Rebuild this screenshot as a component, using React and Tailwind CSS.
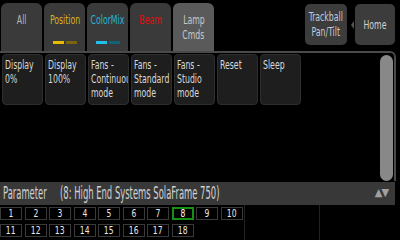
import React from "react";

const font = { fontFamily: '"DejaVu Sans Condensed", "Liberation Sans", sans-serif' };

const tabs = [
  { label: "All", color: "text-[#b8b8b8]" },
  { label: "Position", color: "text-[#d6b21c]", bars: ["bg-[#e6bb00]", "bg-[#7a6410]"] },
  { label: "ColorMix", color: "text-[#27b4d8]", bars: ["bg-[#1fc0ea]", "bg-[#0f6478]"] },
  { label: "Beam", color: "text-[#e01010]" },
];

// lines as they wrap on the console buttons
const actions = [
  ["Display", "0%"],
  ["Display", "100%"],
  ["Fans -", "Continuous", "mode"],
  ["Fans -", "Standard", "mode"],
  ["Fans -", "Studio", "mode"],
  ["Reset"],
  ["Sleep"],
];

const row1 = [1, 2, 3, 4, 5, 6, 7, 8, 9, 10];
const row2 = [11, 12, 13, 14, 15, 16, 17, 18];

const NumBox = ({ n }) => (
  <div
    className={
      n === 8
        ? "w-[22px] h-[13px] border-2 border-[#149014] bg-black flex items-center justify-center text-[10px] leading-none text-white"
        : "w-[22px] h-[13px] border border-[#3a3a3a] bg-black flex items-center justify-center text-[10px] leading-none text-[#e8e8e8]"
    }
  >
    <span className="inline-block scale-x-[0.85]">{n}</span>
  </div>
);

export default function App() {
  return (
    <div className="w-[400px] h-[240px] bg-black overflow-hidden flex flex-col" style={font}>
      {/* top tab row */}
      <div className="h-[51px] flex items-start shrink-0">
        <div className="flex gap-[2px] ml-[1px] mt-[3px]">
          {tabs.map((t) => (
            <div
              key={t.label}
              className="w-[41px] h-[48px] rounded-t-[6px] bg-[#3a3a3a] flex flex-col items-center pt-[10px]"
            >
              <span className={`inline-block whitespace-nowrap scale-x-[0.72] text-[12px] leading-[14px] ${t.color}`}>
                {t.label}
              </span>
              {t.bars && (
                <div className="flex gap-[2px] mt-[14px]">
                  <div className={`w-[11px] h-[3px] ${t.bars[0]}`} />
                  <div className={`w-[11px] h-[3px] ${t.bars[1]}`} />
                </div>
              )}
            </div>
          ))}
          <div className="w-[41px] h-[48px] rounded-t-[6px] bg-[#5a5a5a] flex flex-col items-center pt-[10px] text-[12px] leading-[15px] text-[#c8c8c8]">
            <span className="inline-block scale-x-[0.72]">Lamp</span>
            <span className="inline-block scale-x-[0.72]">Cmds</span>
          </div>
        </div>
        <div className="ml-auto mr-[5px] mt-[4px] flex gap-[8px]">
          <div className="w-[42px] h-[41px] rounded-[5px] bg-[#3c3c3c] flex flex-col items-center justify-center text-[12px] leading-[15px] text-[#c4cad6]">
            <span className="inline-block whitespace-nowrap scale-x-[0.72]">Trackball</span>
            <span className="inline-block whitespace-nowrap scale-x-[0.72]">Pan/Tilt</span>
          </div>
          <div className="relative w-[40px] h-[41px] rounded-[5px] bg-[#3c3c3c] flex items-center justify-center text-[12px] text-[#d0d0d0]">
            <div className="absolute left-[-4px] top-[17px] w-0 h-0 border-y-[4px] border-y-transparent border-r-[3px] border-r-[#555]" />
            <span className="inline-block scale-x-[0.72]">Home</span>
          </div>
        </div>
      </div>

      {/* lamp commands panel */}
      <div className="h-[130px] shrink-0 mr-[4px] border-t-2 border-r-2 border-[#4a4a4a] rounded-tr-[6px] flex">
        <div className="flex-1 flex gap-[2px] pl-[2px] pt-[1px]">
          {actions.map((lines) => (
            <div
              key={lines.join(" ")}
              className="w-[41px] h-[51px] rounded-[4px] bg-[#1e1e1e] border border-[#2e2e2e] pl-[2px] pt-[3px] overflow-hidden"
            >
              <div className="w-[60px] origin-top-left scale-x-[0.72] text-[12px] leading-[14px] text-[#d8d8d8]">
                {lines.map((l) => (
                  <div key={l} className="whitespace-nowrap">
                    {l}
                  </div>
                ))}
              </div>
            </div>
          ))}
        </div>
        <div className="w-[13px] mt-[2px] mr-[1px] rounded-full bg-[#888888]" />
      </div>

      {/* parameter bar */}
      <div className="h-[23px] shrink-0 mt-[1px] mr-[5px] bg-[#383838] flex items-center pl-[3px] pr-[7px] text-[#d2d2d2]">
        <div className="flex-1 min-w-0 text-[17px] leading-[23px]">
          <span className="inline-block whitespace-nowrap origin-left scale-x-[0.55]">
            Parameter&nbsp;&nbsp;&nbsp;&nbsp;&nbsp;(8: High End Systems SolaFrame 750)
          </span>
        </div>
        <span className="shrink-0 text-[11px] text-[#a0a0a0] tracking-[-1px]">▲▼</span>
      </div>

      {/* fixture number grid */}
      <div className="flex-1 flex">
        <div className="w-[245px] border-r border-[#222] flex flex-col gap-[4px] pt-[2px]">
          <div className="flex gap-x-[2.5px]">
            {row1.map((n) => (
              <NumBox key={n} n={n} />
            ))}
          </div>
          <div className="flex gap-x-[2.5px]">
            {row2.map((n) => (
              <NumBox key={n} n={n} />
            ))}
          </div>
        </div>
        <div className="w-[75px] border-r border-[#222]" />
      </div>
    </div>
  );
}
